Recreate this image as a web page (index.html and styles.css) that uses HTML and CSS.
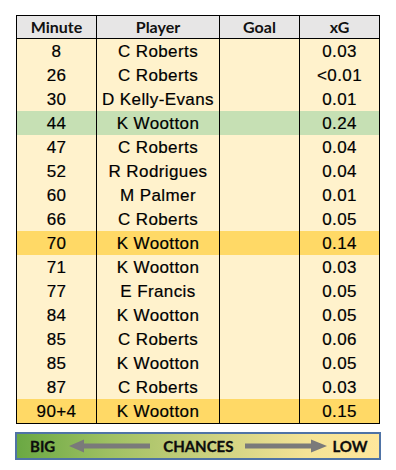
FILE: index.html
```html
<!DOCTYPE html>
<html>
<head>
<meta charset="utf-8">
<link rel="stylesheet" href="styles.css">
</head>
<body>
<div class="page">
  <div class="grid">
    <div class="th">Minute</div><div class="th">Player</div><div class="th">Goal</div><div class="th">xG</div>
    <div class="td">8</div><div class="td">C Roberts</div><div class="td"></div><div class="td">0.03</div>
    <div class="td">26</div><div class="td">C Roberts</div><div class="td"></div><div class="td">&lt;0.01</div>
    <div class="td">30</div><div class="td">D Kelly-Evans</div><div class="td"></div><div class="td">0.01</div>
    <div class="td g">44</div><div class="td g">K Wootton</div><div class="td g"></div><div class="td g">0.24</div>
    <div class="td">47</div><div class="td">C Roberts</div><div class="td"></div><div class="td">0.04</div>
    <div class="td">52</div><div class="td">R Rodrigues</div><div class="td"></div><div class="td">0.04</div>
    <div class="td">60</div><div class="td">M Palmer</div><div class="td"></div><div class="td">0.01</div>
    <div class="td">66</div><div class="td">C Roberts</div><div class="td"></div><div class="td">0.05</div>
    <div class="td o">70</div><div class="td o">K Wootton</div><div class="td o"></div><div class="td o">0.14</div>
    <div class="td">71</div><div class="td">K Wootton</div><div class="td"></div><div class="td">0.03</div>
    <div class="td">77</div><div class="td">E Francis</div><div class="td"></div><div class="td">0.05</div>
    <div class="td">84</div><div class="td">K Wootton</div><div class="td"></div><div class="td">0.05</div>
    <div class="td">85</div><div class="td">C Roberts</div><div class="td"></div><div class="td">0.06</div>
    <div class="td">85</div><div class="td">K Wootton</div><div class="td"></div><div class="td">0.05</div>
    <div class="td">87</div><div class="td">C Roberts</div><div class="td"></div><div class="td">0.03</div>
    <div class="td o">90+4</div><div class="td o">K Wootton</div><div class="td o"></div><div class="td o">0.15</div>
  </div>
  <div class="legend">
    <span class="lbl big">BIG</span>
    <svg class="arrow left" width="81" height="14" viewBox="0 0 81 14"><polygon points="0,7 15,0.5 15,4.6 81,4.6 81,9.4 15,9.4 15,13.5" fill="#7a7a7a"/></svg>
    <span class="lbl chances">CHANCES</span>
    <svg class="arrow right" width="82" height="14" viewBox="0 0 82 14"><polygon points="82,7 66,0.5 66,4.6 0,4.6 0,9.4 66,9.4 66,13.5" fill="#7a7a7a"/></svg>
    <span class="lbl low">LOW</span>
  </div>
</div>
</body>
</html>
```
FILE: styles.css
```css
html, body {
  margin: 0;
  padding: 0;
  background: #ffffff;
}
.page {
  padding: 15px 0 0 16px;
}
.grid {
  display: grid;
  grid-template-columns: 79px 123px 80px 80px;
  width: max-content;
  border: 1px solid #000;
}
.th, .td {
  box-sizing: border-box;
  text-align: center;
  color: #000;
  white-space: nowrap;
}
.th:not(:nth-child(4n+1)), .td:not(:nth-child(4n+1)) {
  border-left: 1px solid #000;
}
.th {
  height: 23px;
  line-height: 22px;
  background: #e7e6e6;
  border-bottom: 1px solid #000;
  font-family: Lato, "Open Sans", sans-serif;
  font-weight: 700;
  font-size: 16px;
  color: #111;
}
.td {
  height: 24px;
  padding-top: 2px;
  line-height: 22px;
  background: #fff2cc;
  font-family: "Liberation Sans", Arial, sans-serif;
  font-size: 17px;
  letter-spacing: 0.4px;
  -webkit-text-stroke: 0.2px #000;
}
.td.g { background: #c6e0b4; }
.td.o { background: #ffd966; }

.legend {
  box-sizing: border-box;
  margin: 8px 0 0 -1px;
  width: 366px;
  height: 28px;
  border: 2px solid #4f73a6;
  background: linear-gradient(to right, #6aa843 0%, #9ec062 25%, #cfd281 55%, #f4e396 80%, #ffe79c 100%);
  display: flex;
  align-items: center;
  padding-left: 13px;
}
.lbl {
  font-family: Lato, "Open Sans", sans-serif;
  font-weight: 700;
  font-size: 15px;
  color: #0d0d0d;
  -webkit-text-stroke: 0.3px #0d0d0d;
}
.arrow { display: block; }
.arrow.left { margin-left: 14px; }
.chances { margin-left: 13px; }
.arrow.right { margin-left: 12px; }
.low { margin-left: 5px; }
```
